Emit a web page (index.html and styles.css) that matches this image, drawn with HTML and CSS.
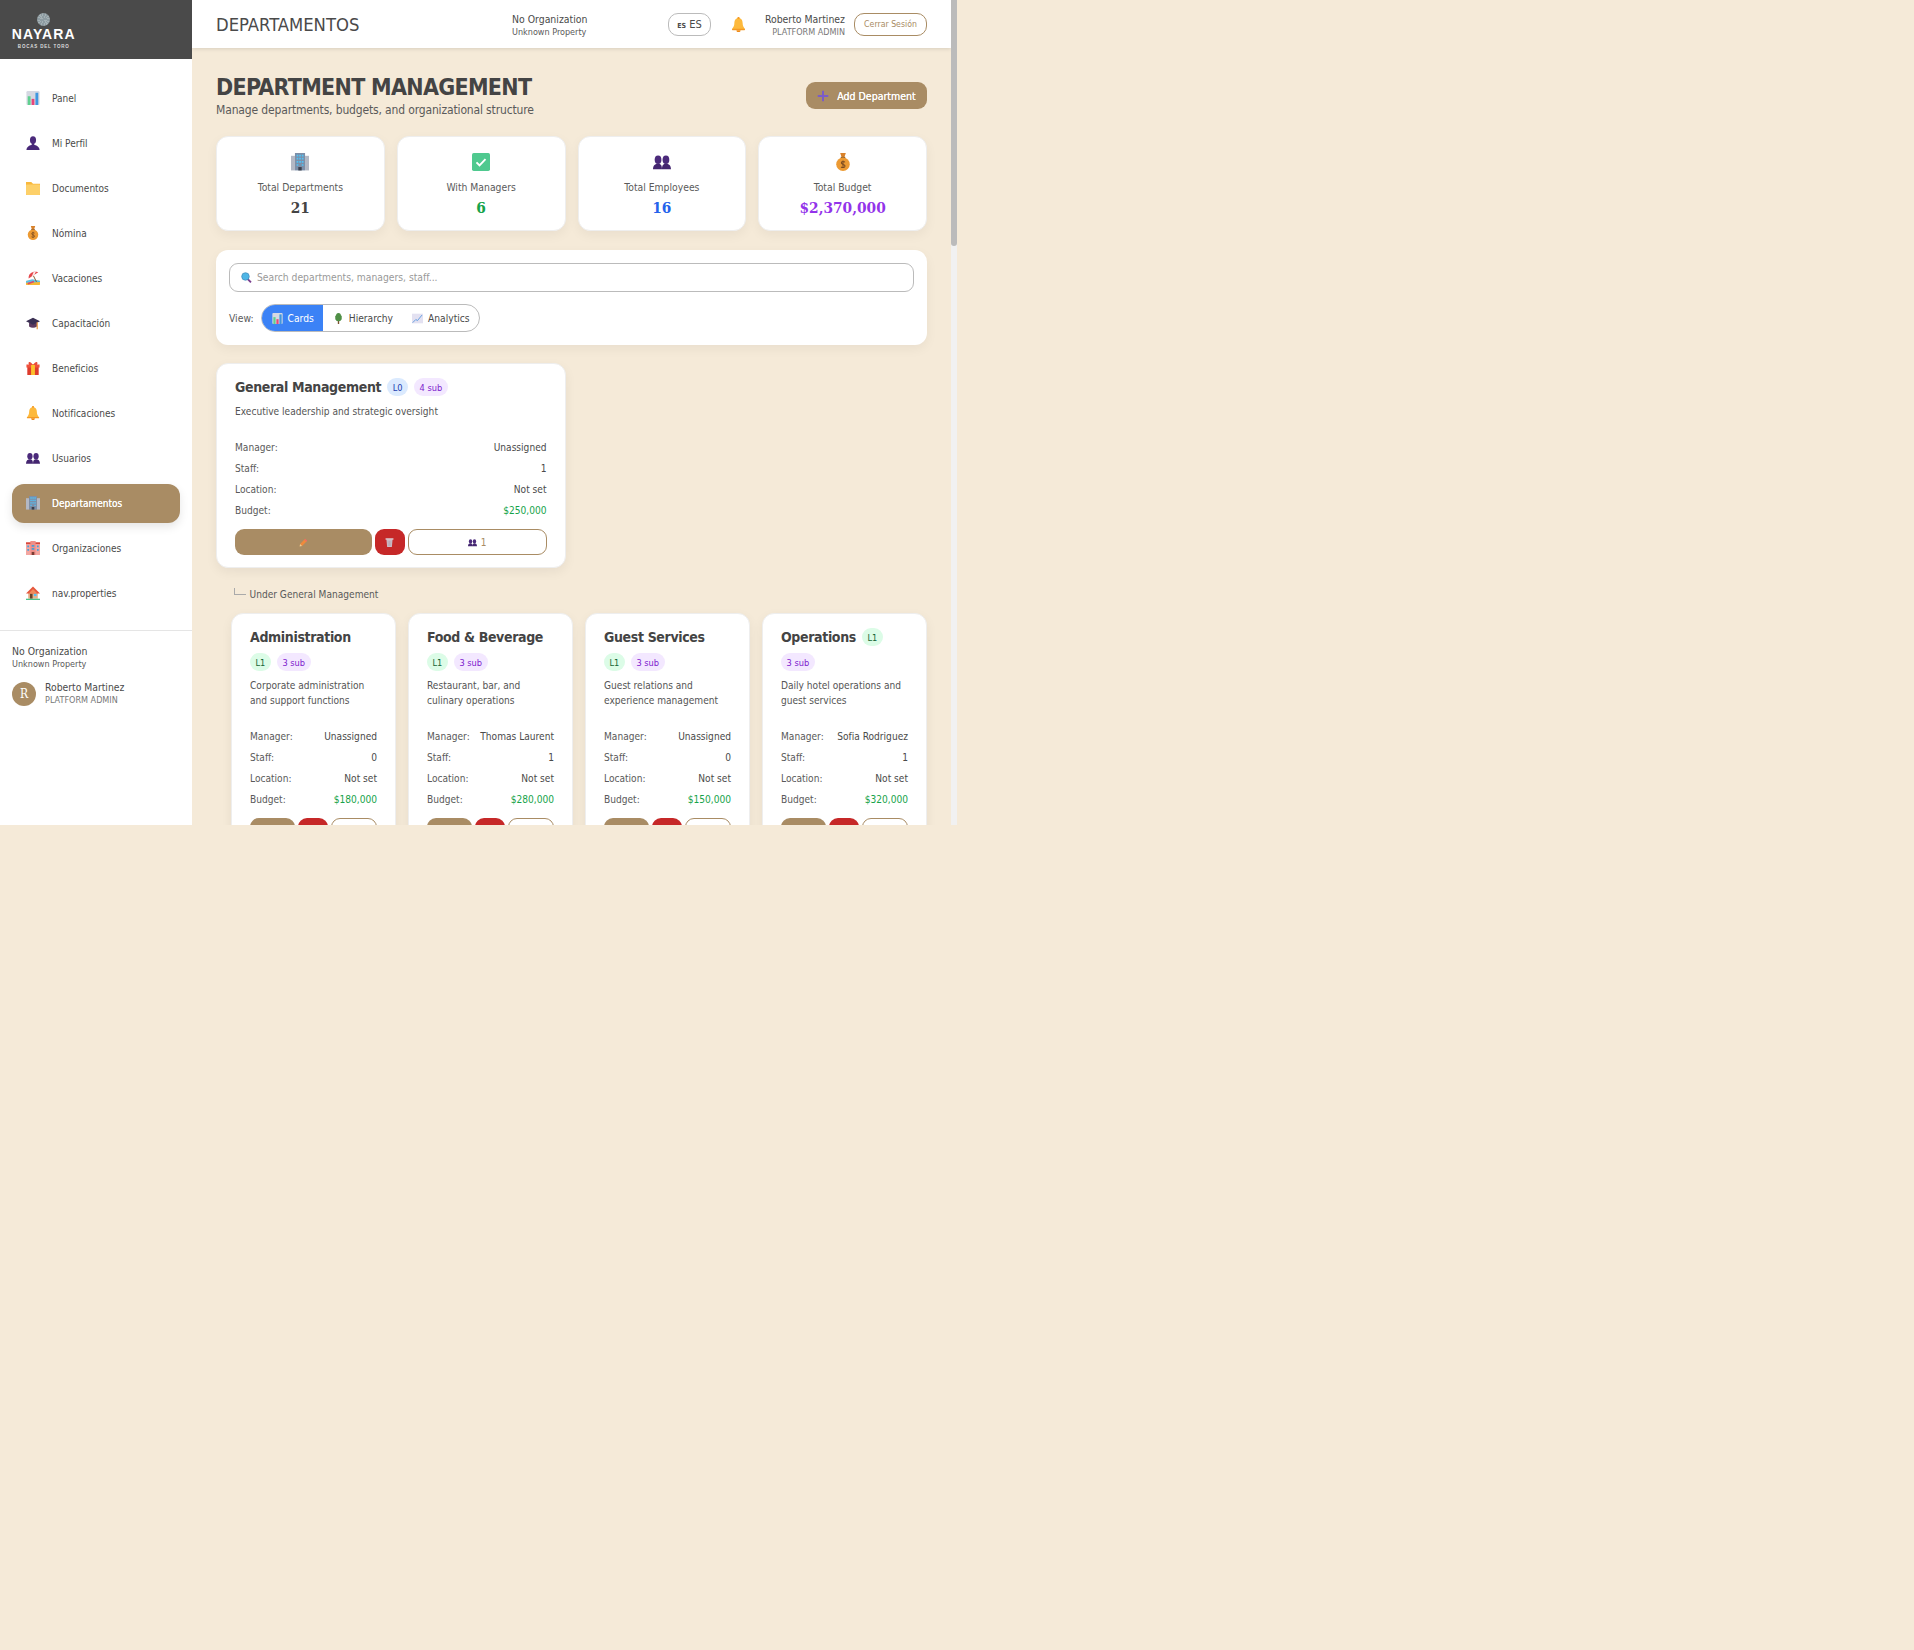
FILE: index.html
```html
<!DOCTYPE html>
<html lang="es">
<head>
<meta charset="utf-8">
<title>Departamentos</title>
<link rel="stylesheet" href="styles.css">
</head>
<body>
<svg class="defs" xmlns="http://www.w3.org/2000/svg">
  <symbol id="i-chart" viewBox="0 0 16 16"><rect x="0.500" y="0" width="15" height="16" rx="1.500" fill="#d5d8e2"/><rect x="2" y="6" width="3.200" height="10" fill="#5fd08f"/><rect x="6.400" y="9" width="3.200" height="7" fill="#e8457a"/><rect x="10.800" y="2" width="3.200" height="14" fill="#3f97e0"/></symbol>
  <symbol id="i-person" viewBox="0 0 16 16"><ellipse cx="8" cy="4.600" rx="3.500" ry="4.400" fill="#4b2a7b"/><rect x="6.500" y="8" width="3" height="3" fill="#4b2a7b"/><path d="M0.500 16c0-3.500 3-5.800 7.500-5.800s7.500 2.300 7.500 5.800z" fill="#472777"/></symbol>
  <symbol id="i-folder" viewBox="0 0 16 16"><path d="M0 1h6l2 2h8v13H0z" fill="#f9b83c"/><rect x="0" y="4" width="16" height="12" rx=".8" fill="#fdd069"/></symbol>
  <symbol id="i-bag" viewBox="0 0 16 16"><path d="M5.500 0h5L9.300 3.600H6.700z" fill="#d9822b"/><rect x="6" y="3.400" width="4" height="1.300" fill="#8a5a2a"/><circle cx="8" cy="10" r="6" fill="#ec9a33"/><path d="M9.800 8.200C9 7.300 6.500 7.300 6.500 8.900s3.300 1 3.300 2.700-2.700 1.700-3.500.7M8 6.600v6.800" fill="none" stroke="#7a4a20" stroke-width=".9"/></symbol>
  <symbol id="i-umbrella" viewBox="0 0 16 16"><rect x="0" y="11" width="16" height="5" rx="1" fill="#f7b733"/><path d="M0 11.500l7-2 9 1.500v1.500l-16 1z" fill="#5cc0e8"/><path d="M3 8.500C2.500 3 7.500 -.5 14 1.500z" fill="#e5484d"/><path d="M6.500 6.500L8.800 .8l2.400.1L9 6z" fill="#fde8e8"/><path d="M8.500 5.500L12 12.500" stroke="#8a5a2a" stroke-width="1.100"/><path d="M2 14.500l7-2.500" stroke="#d9486a" stroke-width="1.800"/></symbol>
  <symbol id="i-cap" viewBox="0 0 16 16"><path d="M3.500 8v4c2.500 1.800 6.500 1.800 9 0V8z" fill="#5d3a5e"/><path d="M0 6L8 2l8 4L8 10z" fill="#3a2f52"/><path d="M12.800 7v8" stroke="#e8912d" stroke-width="1.300"/></symbol>
  <symbol id="i-gift" viewBox="0 0 16 16"><rect x="1.500" y="6" width="13" height="10" fill="#de3b2c"/><rect x="0.500" y="4" width="15" height="3.500" fill="#f0503c"/><rect x="5.800" y="4" width="4.400" height="12" fill="#fbc02d"/><path d="M8 4.500C5 -.5 1.500 .5 3.500 4.500zM8 4.500c3-5 6.500-4 4.500 0z" fill="#e94d3a"/></symbol>
  <symbol id="i-bell" viewBox="0 0 16 16"><path d="M8 1c-3 0-4.400 2.500-4.400 5.500 0 3-1.200 4.500-2.600 6.500h14c-1.400-2-2.600-3.500-2.600-6.500C12.400 3.500 11 1 8 1z" fill="#fdb93c"/><rect x="1" y="12.500" width="14" height="1.500" rx=".7" fill="#f59a23"/><path d="M5.800 14h4.400a2.200 2.200 0 0 1-4.400 0z" fill="#ef8a17"/><rect x="7" y="0" width="2" height="2" fill="#f59a23"/></symbol>
  <symbol id="i-users" viewBox="0 0 16 16"><ellipse cx="4.500" cy="6" rx="3" ry="3.800" fill="#4b2a7b"/><ellipse cx="11.500" cy="6" rx="3" ry="3.800" fill="#4b2a7b"/><path d="M0 14.500c0-3.500 2-5 4.500-5S8 11 8 14.500zM8 14.500c0-3.500 1-5 3.500-5s4.500 1.500 4.500 5z" fill="#442670"/></symbol>
  <symbol id="i-building" viewBox="0 0 16 16"><rect x="0" y="2.500" width="3.500" height="13" fill="#b3b8c4"/><rect x="12.500" y="2.500" width="3.500" height="13" fill="#b3b8c4"/><rect x="3.500" y="0" width="9" height="15.500" fill="#7d8fa8"/><path d="M5 1.500h1.500V3H5zM7.300 1.500h1.500V3H7.300zM9.600 1.500h1.500V3H9.600zM5 4.300h1.500v1.500H5zM7.300 4.300h1.500v1.500H7.300zM9.600 4.300h1.500v1.500H9.600zM5 7.100h1.500v1.500H5zM7.300 7.100h1.500v1.500H7.300zM9.600 7.100h1.500v1.500H9.600zM5 9.900h1.500v1.500H5zM9.600 9.900h1.500v1.500H9.600z" fill="#4fc3f7"/><rect x="6.500" y="12.500" width="3" height="3" fill="#3a3f4a"/></symbol>
  <symbol id="i-hotel" viewBox="0 0 16 16"><rect x="0" y="2" width="16" height="14" fill="#f3a6a0"/><rect x="0" y="1.500" width="16" height="2" fill="#d9483b"/><rect x="5" y="0" width="6" height="16" fill="#ef8f88"/><path d="M1.500 5h2v2h-2zM12.500 5h2v2h-2zM1.500 9h2v2h-2zM12.500 9h2v2h-2zM6.500 4.500h3v2h-3zM6.500 8h3v2h-3z" fill="#4a9fd8"/><rect x="6.500" y="12.500" width="3" height="3.500" fill="#7a3d35"/></symbol>
  <symbol id="i-house" viewBox="0 0 16 16"><rect x="2.500" y="7" width="11" height="7.500" fill="#e8b28a"/><path d="M0 8.500L8 0.500l8 8z" fill="#e5563c"/><path d="M3 8.500L8 3.500l5 5z" fill="#f08a5a"/><rect x="4.500" y="9" width="3" height="5.500" fill="#6b4226"/><rect x="9" y="9" width="3" height="2.500" fill="#4fc3f7"/><rect x="0" y="14.500" width="16" height="1.500" fill="#4cc38a"/></symbol>
  <symbol id="i-check" viewBox="0 0 16 16"><rect x="0" y="0" width="16" height="16" rx="1.500" fill="#4fc98f"/><path d="M4 8.300l2.700 2.700L12 5.500" fill="none" stroke="#fff" stroke-width="1.700"/></symbol>
  <symbol id="i-plus" viewBox="0 0 16 16"><path d="M6.700 1h2.600v5.700H15v2.600H9.300V15H6.700V9.300H1V6.700h5.700z" fill="#7a5cc8"/></symbol>
  <symbol id="i-search" viewBox="0 0 16 16"><path d="M9.500 10l5 5" stroke="#7a3f8f" stroke-width="2.800"/><circle cx="6.500" cy="6.500" r="5.500" fill="#4fb6e6" stroke="#3f88b8" stroke-width="1"/></symbol>
  <symbol id="i-tree" viewBox="0 0 16 16"><rect x="7" y="11" width="2" height="5" fill="#7a5230"/><path d="M8 0c2.500 0 3.500 2 3.500 3.200 1.300.8 1.800 2.400 1.100 3.600.8 2-.9 5.200-4.600 5.200s-5.400-3.200-4.600-5.200c-.7-1.200-.2-2.800 1.100-3.600C4.500 2 5.500 0 8 0z" fill="#4f8f46"/></symbol>
  <symbol id="i-line" viewBox="0 0 16 16"><rect x="0" y="1" width="16" height="14" fill="#e3e1f1"/><path d="M1 14l4.500-4.500 2.500 1.500L14.500 3" fill="none" stroke="#5a9ae0" stroke-width="1.300"/></symbol>
  <symbol id="i-pencil" viewBox="0 0 16 16"><path d="M11 1.500l3.500 3.500-9 9-3.500-3.500z" fill="#f08a3c"/><path d="M2 10.500L1 15l4.500-1z" fill="#f5c98a"/><path d="M11 1.500l3.500 3.500-1.500 1.500L9.500 3z" fill="#ea6a6a"/></symbol>
  <symbol id="i-trash" viewBox="0 0 16 16"><path d="M2.500 2h11l-1.300 14H3.800z" fill="#cdbcc6"/><rect x="1" y="0.500" width="14" height="2.500" fill="#dcd2d8"/><path d="M5.500 5l.4 9M8 5v9M10.500 5l-.4 9" stroke="#a796a4" stroke-width=".8"/></symbol>
</svg>

<div class="app">
  <aside class="sidebar">
    <div class="brand">
      <span class="brand-mark"></span>
      <span class="brand-name">NAYARA</span>
      <span class="brand-sub">BOCAS DEL TORO</span>
    </div>
    <nav class="nav">
      <a class="nav-item"><svg class="nav-icon"><use href="#i-chart"/></svg>Panel</a>
      <a class="nav-item"><svg class="nav-icon"><use href="#i-person"/></svg>Mi Perfil</a>
      <a class="nav-item"><svg class="nav-icon"><use href="#i-folder"/></svg>Documentos</a>
      <a class="nav-item"><svg class="nav-icon"><use href="#i-bag"/></svg>Nómina</a>
      <a class="nav-item"><svg class="nav-icon"><use href="#i-umbrella"/></svg>Vacaciones</a>
      <a class="nav-item"><svg class="nav-icon"><use href="#i-cap"/></svg>Capacitación</a>
      <a class="nav-item"><svg class="nav-icon"><use href="#i-gift"/></svg>Beneficios</a>
      <a class="nav-item"><svg class="nav-icon"><use href="#i-bell"/></svg>Notificaciones</a>
      <a class="nav-item"><svg class="nav-icon"><use href="#i-users"/></svg>Usuarios</a>
      <a class="nav-item is-active"><svg class="nav-icon"><use href="#i-building"/></svg>Departamentos</a>
      <a class="nav-item"><svg class="nav-icon"><use href="#i-hotel"/></svg>Organizaciones</a>
      <a class="nav-item"><svg class="nav-icon"><use href="#i-house"/></svg>nav.properties</a>
    </nav>
    <div class="side-foot">
      <div class="org-name">No Organization</div>
      <div class="org-prop">Unknown Property</div>
      <div class="side-user">
        <span class="avatar">R</span>
        <div>
          <div class="su-name">Roberto Martinez</div>
          <div class="su-role">PLATFORM ADMIN</div>
        </div>
      </div>
    </div>
  </aside>

  <main class="main">
    <header class="topbar">
      <div class="top-title">DEPARTAMENTOS</div>
      <div class="top-org">
        <div class="org-name">No Organization</div>
        <div class="org-prop">Unknown Property</div>
      </div>
      <button class="lang"><span class="lang-code">ES</span> ES</button>
      <svg class="top-bell"><use href="#i-bell"/></svg>
      <div class="top-user">
        <div class="org-name">Roberto Martinez</div>
        <div class="su-role">PLATFORM ADMIN</div>
      </div>
      <button class="logout">Cerrar Sesión</button>
    </header>

    <div class="content">
      <div class="page-head">
        <div>
          <h1 class="page-title">DEPARTMENT MANAGEMENT</h1>
          <p class="page-sub">Manage departments, budgets, and organizational structure</p>
        </div>
        <button class="add-btn"><svg class="add-icon"><use href="#i-plus"/></svg>Add Department</button>
      </div>

      <section class="stats">
        <div class="stat"><svg class="stat-icon"><use href="#i-building"/></svg><div class="stat-label">Total Departments</div><div class="stat-value">21</div></div>
        <div class="stat"><svg class="stat-icon"><use href="#i-check"/></svg><div class="stat-label">With Managers</div><div class="stat-value c-green">6</div></div>
        <div class="stat"><svg class="stat-icon"><use href="#i-users"/></svg><div class="stat-label">Total Employees</div><div class="stat-value c-blue">16</div></div>
        <div class="stat"><svg class="stat-icon"><use href="#i-bag"/></svg><div class="stat-label">Total Budget</div><div class="stat-value c-purple">$2,370,000</div></div>
      </section>

      <section class="filters">
        <div class="search"><svg class="search-icon"><use href="#i-search"/></svg><span>Search departments, managers, staff...</span></div>
        <div class="view-row">
          <span class="view-label">View:</span>
          <div class="toggle">
            <span class="tg is-on"><svg class="tg-icon"><use href="#i-chart"/></svg>Cards</span>
            <span class="tg"><svg class="tg-icon"><use href="#i-tree"/></svg>Hierarchy</span>
            <span class="tg"><svg class="tg-icon"><use href="#i-line"/></svg>Analytics</span>
          </div>
        </div>
      </section>

      <section class="top-grid">
        <article class="card">
          <div class="card-head"><h3 class="card-title">General Management</h3><span class="badge b-blue">L0</span><span class="badge b-purple">4 sub</span></div>
          <p class="card-desc">Executive leadership and strategic oversight</p>
          <dl class="rows">
            <div class="row"><dt>Manager:</dt><dd>Unassigned</dd></div>
            <div class="row"><dt>Staff:</dt><dd>1</dd></div>
            <div class="row"><dt>Location:</dt><dd>Not set</dd></div>
            <div class="row"><dt>Budget:</dt><dd class="money">$250,000</dd></div>
          </dl>
          <div class="actions">
            <button class="act act-edit"><svg class="act-icon"><use href="#i-pencil"/></svg></button>
            <button class="act act-del"><svg class="act-icon"><use href="#i-trash"/></svg></button>
            <button class="act act-staff"><svg class="act-icon"><use href="#i-users"/></svg> 1</button>
          </div>
        </article>
      </section>

      <div class="under"><span class="elbow"></span>Under General Management</div>

      <section class="sub-grid">
        <article class="card">
          <div class="card-head"><h3 class="card-title">Administration</h3><span class="badge b-green">L1</span><span class="badge b-purple">3 sub</span></div>
          <p class="card-desc">Corporate administration and support functions</p>
          <dl class="rows">
            <div class="row"><dt>Manager:</dt><dd>Unassigned</dd></div>
            <div class="row"><dt>Staff:</dt><dd>0</dd></div>
            <div class="row"><dt>Location:</dt><dd>Not set</dd></div>
            <div class="row"><dt>Budget:</dt><dd class="money">$180,000</dd></div>
          </dl>
          <div class="actions">
            <button class="act act-edit"></button>
            <button class="act act-del"></button>
            <button class="act act-staff"></button>
          </div>
        </article>
        <article class="card">
          <div class="card-head"><h3 class="card-title">Food &amp; Beverage</h3><span class="badge b-green">L1</span><span class="badge b-purple">3 sub</span></div>
          <p class="card-desc">Restaurant, bar, and culinary operations</p>
          <dl class="rows">
            <div class="row"><dt>Manager:</dt><dd>Thomas Laurent</dd></div>
            <div class="row"><dt>Staff:</dt><dd>1</dd></div>
            <div class="row"><dt>Location:</dt><dd>Not set</dd></div>
            <div class="row"><dt>Budget:</dt><dd class="money">$280,000</dd></div>
          </dl>
          <div class="actions">
            <button class="act act-edit"></button>
            <button class="act act-del"></button>
            <button class="act act-staff"></button>
          </div>
        </article>
        <article class="card">
          <div class="card-head"><h3 class="card-title">Guest Services</h3><span class="badge b-green">L1</span><span class="badge b-purple">3 sub</span></div>
          <p class="card-desc">Guest relations and experience management</p>
          <dl class="rows">
            <div class="row"><dt>Manager:</dt><dd>Unassigned</dd></div>
            <div class="row"><dt>Staff:</dt><dd>0</dd></div>
            <div class="row"><dt>Location:</dt><dd>Not set</dd></div>
            <div class="row"><dt>Budget:</dt><dd class="money">$150,000</dd></div>
          </dl>
          <div class="actions">
            <button class="act act-edit"></button>
            <button class="act act-del"></button>
            <button class="act act-staff"></button>
          </div>
        </article>
        <article class="card">
          <div class="card-head"><h3 class="card-title">Operations</h3><span class="badge b-green">L1</span><span class="badge b-purple">3 sub</span></div>
          <p class="card-desc">Daily hotel operations and guest services</p>
          <dl class="rows">
            <div class="row"><dt>Manager:</dt><dd>Sofia Rodriguez</dd></div>
            <div class="row"><dt>Staff:</dt><dd>1</dd></div>
            <div class="row"><dt>Location:</dt><dd>Not set</dd></div>
            <div class="row"><dt>Budget:</dt><dd class="money">$320,000</dd></div>
          </dl>
          <div class="actions">
            <button class="act act-edit"></button>
            <button class="act act-del"></button>
            <button class="act act-staff"></button>
          </div>
        </article>
      </section>
    </div>
  </main>
  <div class="scrollbar"><div class="scroll-thumb"></div></div>
</div>
</body>
</html>
```
FILE: styles.css
```css
* { box-sizing: border-box; }
html, body { margin: 0; padding: 0; }
body {
  background: #f5ead8;
  color: #4a4a4a;
  font-family: "DejaVu Sans Condensed", "DejaVu Sans", sans-serif;
  font-size: 10.300px;
  font-stretch: condensed;
}
.defs { display: none; }
h1, h3, p, dl, dd { margin: 0; }
button { font-family: inherit; font-stretch: inherit; cursor: pointer; }

.app { display: flex; width: 957px; height: 825px; overflow: hidden; }

/* Sidebar */
.sidebar { flex: 0 0 192px; background: #fff; display: flex; flex-direction: column; }
.brand {
  height: 59px; background: #4a4a4a; color: #fff; display: flex; flex-direction: column;
  align-items: center; padding: 13px 104.500px 0 0; flex: none;
}
.brand-mark { width: 13px; height: 13px; border-radius: 50%; background: repeating-conic-gradient(#8d9ba1 0 15deg, #a5b1b5 15deg 30deg); }
.brand-name { font-family: "Liberation Sans", sans-serif; font-stretch: normal; font-weight: 700; font-size: 14px; letter-spacing: 1.100px; line-height: 15px; margin-top: 1px; }
.brand-sub { font-family: "Liberation Sans", sans-serif; font-stretch: normal; font-weight: 700; font-size: 4.500px; letter-spacing: .8px; line-height: 7px; color: #ddd; margin-top: 1px; }

.nav { padding: 19.500px 12px 12px; display: flex; flex-direction: column; gap: 6px; height: 572px; flex: none; border-bottom: 1px solid #e5e5e5; }
.nav-item { display: flex; align-items: center; height: 39px; padding: 0 14px; gap: 12px; border-radius: 12px; color: #4a4a4a; font-size: 10px; }
.nav-item.is-active { background: #a98c64; color: #fff; text-shadow: 0 0 .6px #fff; box-shadow: 0 4px 10px rgba(0,0,0,.1); }
.nav-icon { width: 14px; height: 14px; flex: none; }

.side-foot { padding: 14px 12px; }
.org-name { font-size: 10.400px; line-height: 13px; color: #4a4a4a; }
.org-prop { font-size: 9px; line-height: 12px; color: #5a5a5a; }
.side-user { display: flex; align-items: center; gap: 9px; margin-top: 11px; }
.avatar { width: 24px; height: 24px; border-radius: 50%; background: #a98c64; color: #fff; display: flex; align-items: center; justify-content: center; font-family: "DejaVu Serif", serif; font-size: 12px; }
.su-name { font-size: 10.300px; line-height: 13px; }
.su-role { font-size: 9px; line-height: 12px; color: #777; }

/* Main */
.main { flex: 1; min-width: 0; height: 825px; overflow: hidden; }
.scrollbar { flex: 0 0 6px; height: 825px; background: #f1f1f1; }
.scroll-thumb { height: 246px; background: #bbb; border-radius: 0 0 3px 3px; }

.topbar { height: 48px; background: #fff; display: flex; align-items: center; padding: 0 24px; box-shadow: 0 1px 4px rgba(0,0,0,.12); }
.top-title { font-size: 18.300px; width: 296px; color: #4a4a4a; }
.top-org { width: 156px; padding-top: 2px; }
.lang { width: 43px; height: 23px; border: 1px solid #bbb; border-radius: 10px; background: #fff; font-size: 11px; color: #4a4a4a; padding: 0; margin-right: 20px; }
.lang-code { font-size: 7px; font-weight: 700; }
.top-bell { width: 15px; height: 15px; }
.top-user { width: 99px; text-align: right; margin-right: 9px; padding-top: 2px; }
.logout { width: 73px; height: 23px; border: 1px solid #a98c64; border-radius: 10px; background: #fff; color: #a98c64; font-size: 8.700px; padding: 0; }

.content { padding: 28px 24px 0; }

.page-head { display: flex; justify-content: space-between; align-items: center; height: 40px; margin-bottom: 20px; }
.page-title { font-size: 23px; letter-spacing: -.7px; line-height: 26px; font-weight: 700; color: #444; margin-bottom: 2px; }
.page-sub { font-size: 12px; letter-spacing: -.15px; line-height: 16px; color: #5a5a5a; }
.add-btn { display: flex; align-items: center; justify-content: center; gap: 8px; width: 121px; height: 27px; background: #a98c64; color: #fff; border: 0; border-radius: 9px; font-size: 10.500px; text-shadow: 0 0 .6px #fff; padding: 0; margin-top: -1px; }
.add-icon { width: 12px; height: 12px; }

.stats { display: grid; grid-template-columns: repeat(4, 1fr); gap: 12px; margin-bottom: 19px; }
.stat { height: 95px; background: #fff; border: 1px solid #eee; border-radius: 12px; box-shadow: 0 4px 12px rgba(0,0,0,.05); display: flex; flex-direction: column; align-items: center; padding-top: 16px; }
.stat-icon { width: 18px; height: 18px; flex: none; }
.stat-label { font-size: 10.300px; line-height: 14px; margin-top: 9px; color: #5a5a5a; }
.stat-value { font-family: "DejaVu Serif Condensed", "DejaVu Serif", serif; font-stretch: condensed; font-weight: 700; font-size: 15.300px; line-height: 20px; margin-top: 4px; color: #444; }
.c-green { color: #16a34a; }
.c-blue { color: #2563eb; }
.c-purple { color: #9333ea; }

.filters { background: #fff; border-radius: 12px; padding: 12.500px 13px 0; height: 95px; box-shadow: 0 4px 12px rgba(0,0,0,.05); margin-bottom: 18px; }
.search { height: 29px; border: 1px solid #bbb; border-radius: 9px; display: flex; align-items: center; padding: 0 11px; gap: 5px; color: #999; font-size: 10.250px; }
.search-icon { width: 11px; height: 11px; }
.view-row { display: flex; align-items: center; gap: 7px; margin-top: 12.500px; }
.view-label { font-size: 10.300px; color: #5a5a5a; }
.toggle { display: flex; height: 28px; border: 1px solid #bbb; border-radius: 14px; overflow: hidden; }
.tg { display: flex; align-items: center; gap: 5px; padding: 0 9px 0 10px; font-size: 10.200px; color: #4a4a4a; }
.tg.is-on { background: #3b82f6; color: #fff; }
.tg-icon { width: 11px; height: 11px; }

.card { background: #fff; border: 1px solid #eee; border-radius: 12px; padding: 13px 18px 12px; box-shadow: 0 4px 12px rgba(0,0,0,.06); }
.top-grid { display: grid; grid-template-columns: repeat(2, 1fr); gap: 12px; }
.card-head { display: flex; flex-wrap: wrap; align-items: center; gap: 6px; }
.card-title { font-size: 14px; letter-spacing: -.35px; line-height: 20px; font-weight: 700; color: #444; }
.badge { height: 18px; border-radius: 9px; display: inline-flex; align-items: center; padding: 0 5.500px; font-size: 9.200px; }
.b-blue { background: #dbeafe; color: #1e40af; }
.b-green { background: #dcfce7; color: #166534; }
.b-purple { background: #f3e8ff; color: #7e22ce; }
.card-desc { font-size: 10.100px; line-height: 15px; margin-top: 7px; color: #555; }
.rows { margin-top: 18px; }
.row { display: flex; justify-content: space-between; height: 21px; align-items: center; font-size: 10.100px; }
.row dt { color: #5a5a5a; }
.row dd { color: #4a4a4a; }
.row dd.money { color: #16a34a; }
.actions { display: flex; gap: 3px; margin-top: 8px; }
.act { height: 26px; border-radius: 9px; border: 0; display: flex; align-items: center; justify-content: center; gap: 4px; padding: 0; font-size: 10px; }
.act-edit { flex: 1 1 0; background: #a98c64; }
.act-del { flex: 0 0 30px; background: #c62828; }
.act-staff { flex: 1 1 0; background: #fff; border: 1px solid #a98c64; color: #a98c64; }
.act-icon { width: 9px; height: 9px; }

.under { display: flex; align-items: center; gap: 3.500px; margin: 16.500px 0 8.500px 0; padding-left: 18px; height: 20px; font-size: 10.100px; color: #5a5a5a; }
.elbow { width: 12px; height: 7px; border-left: 1px solid #aaa; border-bottom: 1px solid #aaa; margin-top: -6px; }
.sub-grid { display: grid; grid-template-columns: repeat(4, 1fr); gap: 12px; margin-left: 15px; }
```
